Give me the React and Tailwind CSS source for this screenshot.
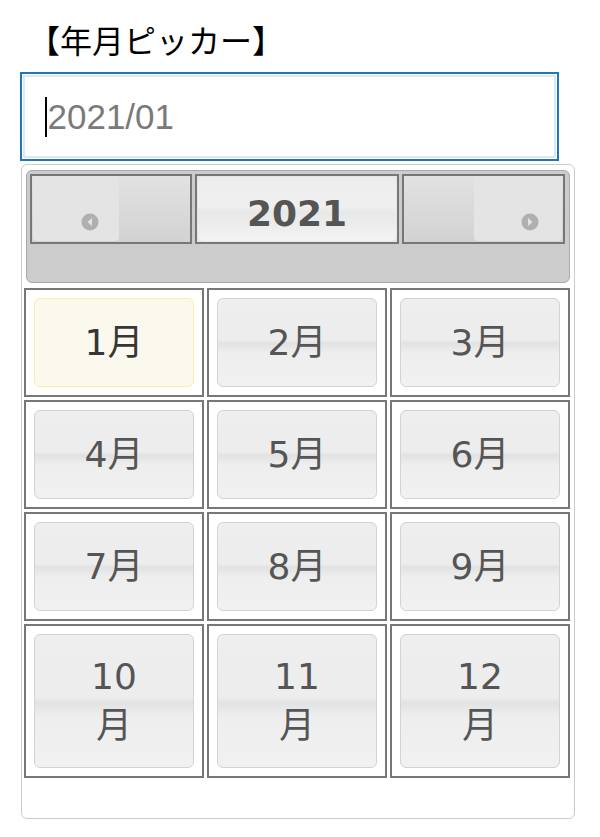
import React from "react";

const months = [
  ["1", "月"],
  ["2", "月"],
  ["3", "月"],
  ["4", "月"],
  ["5", "月"],
  ["6", "月"],
  ["7", "月"],
  ["8", "月"],
  ["9", "月"],
  ["10", "月"],
  ["11", "月"],
  ["12", "月"],
];

const glass =
  "bg-[linear-gradient(to_bottom,#eeeeee_0%,#ededed_47%,#e2e2e2_51%,#eeeeee_62%,#f1f1f1_100%)]";

// small round arrow used in prev / next buttons
const Arrow = ({ dir }) => (
  <svg width="18" height="18" viewBox="0 0 18 18">
    <circle cx="9" cy="9" r="8.5" fill="#b0b0b0" />
    {dir === "prev" ? (
      <path d="M11 5 L6.5 9 L11 13 Z" fill="#e4e4e4" />
    ) : (
      <path d="M7 5 L11.5 9 L7 13 Z" fill="#e4e4e4" />
    )}
  </svg>
);

const MonthCell = ({ num, label, active, tall }) => (
  <div className="border-2 border-[#777777] p-[8px] flex">
    <div
      className={
        "flex-1 flex items-center justify-center rounded-[6px] border text-center text-[36px] " +
        (active
          ? "border-[#fcefa1] bg-[#fbf9ee] text-[#363636]"
          : "border-[#d3d3d3] text-[#555555] " + glass)
      }
      style={{ fontFamily: '"DejaVu Sans", "Noto Sans CJK JP", sans-serif' }}
    >
      {tall ? (
        <div className="leading-[49px]">
          <div>{num}</div>
          <div>{label}</div>
        </div>
      ) : (
        <span className="leading-none">
          {num}
          {label}
        </span>
      )}
    </div>
  </div>
);

export default function App() {
  return (
    <div className="w-[600px] h-[837px] bg-white pl-[20px]">
      {/* title */}
      <div
        className="h-[72px] pt-[15px] text-[32px] leading-[48px] text-black ml-[8px]"
        style={{ fontFamily: '"Noto Sans CJK JP", sans-serif' }}
      >
        【年月ピッカー】
      </div>

      {/* input */}
      <div className="w-[539px] h-[89px] border-2 border-[#2176b5] p-[1px]">
        <div className="h-full border-2 border-[#dbe8f5] flex items-center pl-[20px]">
          <span className="w-[1.5px] h-[40px] bg-black mr-px" />
          <span
            className="text-[35px] text-[#7a7a7a] leading-none"
            style={{ fontFamily: '"Liberation Sans", Arial, sans-serif' }}
          >
            2021/01
          </span>
        </div>
      </div>

      {/* popup */}
      <div className="ml-px mt-[3px] w-[554px] h-[655px] border border-[#cccccc] rounded-[6px] pt-[5px]">
        {/* header */}
        <div className="mx-[4px] h-[113px] border border-[#aaaaaa] bg-[#cccccc] rounded-[6px] pt-[3px] pl-[3px] pr-[2px]">
          <div className="flex gap-[3px] h-[70px]">
            <div className="w-[162px] border-2 border-[#777777] bg-[linear-gradient(to_bottom,#e2e2e2,#d2d2d2)] flex">
              <div className="w-[86px] bg-[#e4e4e4] rounded-[4px] m-px" />
            </div>
            <div className="w-[204px] border-2 border-[#777777] bg-[#e6e6e6] flex p-px">
              <div
                className="flex-1 rounded-[5px] bg-[linear-gradient(to_bottom,#ededed_0%,#f0f0f0_45%,#e8e8e8_55%,#f3f3f3_100%)] flex items-center justify-center pt-[10px] text-[36px] font-bold text-[#555555] leading-none"
                style={{ fontFamily: '"DejaVu Sans", sans-serif' }}
              >
                2021
              </div>
            </div>
            <div className="w-[163px] border-2 border-[#777777] bg-[linear-gradient(to_bottom,#e2e2e2,#d2d2d2)] flex justify-end">
              <div className="w-[88px] bg-[#e4e4e4] rounded-[4px] m-px" />
            </div>
          </div>
        </div>

        {/* arrows over the header buttons */}
        <div className="relative">
          <div className="absolute left-[59px] -top-[70px]">
            <Arrow dir="prev" />
          </div>
          <div className="absolute left-[499px] -top-[70px]">
            <Arrow dir="next" />
          </div>
        </div>

        {/* months grid */}
        <div className="ml-[2px] mt-[5px] grid grid-cols-[180px_180px_180px] grid-rows-[109px_109px_109px_154px] gap-[3px]">
          {months.map(([n, l], i) => (
            <MonthCell key={n} num={n} label={l} active={i === 0} tall={i >= 9} />
          ))}
        </div>
      </div>
    </div>
  );
}
